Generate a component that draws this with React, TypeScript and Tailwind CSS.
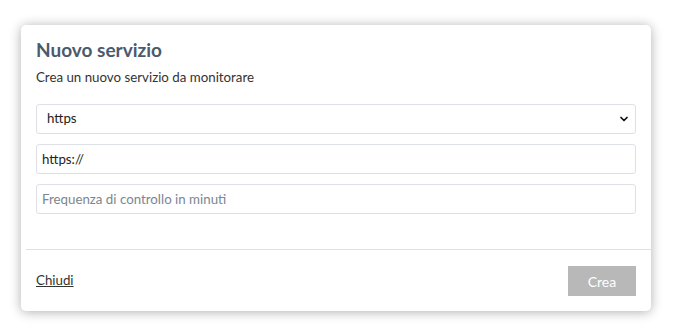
import { ChevronDown } from "lucide-react";

export default function App() {
  return (
    <div
      className="min-h-[336px] bg-white pl-[21px] pt-[25px]"
      style={{ fontFamily: "Lato, 'Liberation Sans', sans-serif" }}
    >
      <div className="flex w-[630px] flex-col rounded-[5px] bg-white shadow-[0_1px_12px_rgba(0,0,0,0.32)]">
        {/* Body */}
        <div className="flex flex-col px-[15px] pt-[13px] pb-[35px]">
          <h2 className="text-[19px] leading-[24px] font-bold text-[#4b5a6d]">
            Nuovo servizio
          </h2>
          <p className="mt-[6px] text-[13.3px] leading-[18px] text-[#333]">
            Crea un nuovo servizio da monitorare
          </p>

          <div className="mt-[18px] flex flex-col gap-[10px]">
            <div className="relative">
              <select
                defaultValue="https"
                className="h-[30px] w-full appearance-none rounded-[3px] border border-[#dde1e6] bg-white pl-[10px] text-[13.3px] text-[#222] outline-none"
              >
                <option value="https">https</option>
                <option value="http">http</option>
              </select>
              <ChevronDown
                className="pointer-events-none absolute top-[9px] right-[6px] h-[12px] w-[12px] text-[#111]"
                strokeWidth={3.5}
              />
            </div>
            <input
              type="text"
              defaultValue="https://"
              className="h-[30px] w-full rounded-[3px] border border-[#dde1e6] bg-white px-[5px] text-[13.3px] text-[#222] outline-none"
            />
            <input
              type="text"
              placeholder="Frequenza di controllo in minuti"
              className="h-[30px] w-full rounded-[3px] border border-[#dde1e6] bg-white px-[5px] text-[13.3px] text-[#222] outline-none placeholder:text-[#7b8691]"
            />
          </div>
        </div>

        {/* Footer */}
        <div className="ml-[5px] border-t border-[#dde1e6]" />
        <div className="flex items-center justify-between px-[15px] pt-[16px] pb-[15px]">
          <button type="button" className="text-[13.3px] text-[#333] underline">
            Chiudi
          </button>
          <button
            type="button"
            disabled
            className="h-[30px] w-[68px] bg-[#b8b8b8] text-[14px] text-white"
          >
            Crea
          </button>
        </div>
      </div>
    </div>
  );
}
